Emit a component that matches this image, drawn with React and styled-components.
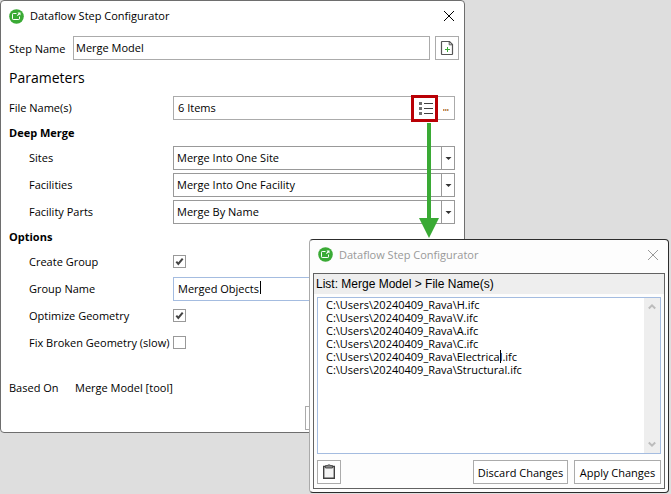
import React from 'react'
import styled, { createGlobalStyle } from 'styled-components'

const GlobalStyle = createGlobalStyle`
* {
  box-sizing: border-box;
}
body {
  margin: 0;
  background: #dedede;
  color: #000;
  font-family: 'Open Sans', 'Noto Sans', sans-serif;
  font-size: 11px;
}
input, select, button, textarea {
  font: inherit;
  color: inherit;
}
`

const Desktop = styled.main`
  position: relative;
  min-height: 494px;
  overflow: hidden;
`

const Window = styled.section`
  width: calc(100% - 206px);
  background: #fff;
  border: 1px solid #6e6e6e;
  border-radius: 4px;
  padding-bottom: 2px;
`

const ListWindow = styled.section`
  position: absolute;
  top: 239px;
  left: 309px;
  right: 2px;
  background: #fdfdfd;
  border: 1px solid #2c2c2c;
  border-left-color: #aaa;
  border-radius: 4px;
  padding: 0 3px 3px;
`

const TitleBar = styled.header`
  display: flex;
  align-items: center;
  gap: 6px;
  height: ${({ $tall }) => ($tall ? 33 : 30)}px;
  padding: ${({ $tall }) => ($tall ? '0 6px 4px 5px' : '0 9px 0 8px')};
  color: ${({ $inactive }) => ($inactive ? '#999' : '#000')};
`

const WindowTitle = styled.h1`
  flex: 1;
  margin: 0;
  font-size: 11px;
  line-height: 16px;
  font-weight: 400;
`

const PlainButton = styled.button`
  display: flex;
  padding: 0;
  border: 0;
  background: none;
`

const StepRow = styled.div`
  display: flex;
  align-items: center;
  gap: 5px;
  padding: 5px 5px 0 8px;
`

const StepLabel = styled.label`
  width: 59px;
  white-space: nowrap;
`

const TextInput = styled.input`
  flex: 1;
  min-width: 0;
  height: 24px;
  padding: 0 4px 2px ${({ $indent }) => ($indent ? 4 : 2)}px;
  border: 1px solid ${({ $focused }) => ($focused ? '#a4bce0' : '#ababab')};
  background: #fff;
  outline: none;
`

const IconButton = styled.button`
  display: flex;
  align-items: center;
  justify-content: center;
  flex-shrink: 0;
  width: 24px;
  height: 24px;
  padding: 0;
  border: 1px solid #ababab;
  background: #fff;
`

const Form = styled.div`
  padding: 0 9px 0 8px;
`

const PageHeading = styled.h2`
  margin: 0;
  font-size: 14px;
  line-height: 36px;
  font-weight: 400;
`

const GroupHeading = styled.h3`
  margin: 0;
  font-size: 11px;
  line-height: 26px;
  font-weight: 700;
`

const Rows = styled.div`
  display: flex;
  flex-direction: column;
  gap: 3px;
`

const Row = styled.div`
  display: flex;
  align-items: center;
  height: 24px;
`

const RowLabel = styled.label`
  flex-shrink: 0;
  width: 164px;
  padding-bottom: 2px;
  padding-left: ${({ $nested }) => ($nested ? 20 : 0)}px;
  white-space: nowrap;
`

const Field = styled.div`
  position: relative;
  display: flex;
  flex: 1;
  min-width: 0;
`

const FileField = styled.div`
  display: flex;
  align-items: center;
  flex: 1;
  min-width: 0;
  height: 24px;
  border: 1px solid #ababab;

  input {
    height: 22px;
    border: 0;
  }
`

const ListButton = styled.button`
  position: relative;
  display: flex;
  align-items: center;
  justify-content: center;
  flex-shrink: 0;
  width: 27px;
  height: 27px;
  padding: 0 0 0 3px;
  border: 3px solid #b90005;
  background: #fff;
`

const Arrow = styled.svg`
  position: absolute;
  top: 25px;
  left: 5px;
  pointer-events: none;
`

const MoreButton = styled(PlainButton)`
  align-items: center;
  justify-content: center;
  width: 16px;
  height: 22px;
  padding-top: 4px;
`

const SelectBox = styled.div`
  display: grid;
  grid-template-columns: 1fr 13px;
  flex: 1;
  min-width: 0;
  height: 24px;
  border: 1px solid #999;

  select {
    grid-area: 1 / 1 / 2 / 3;
    appearance: none;
    min-width: 0;
    padding: 0 16px 2px 3px;
    border: 0;
    background: #fff;
  }
  svg {
    grid-area: 1 / 2;
    width: 13px;
    height: 22px;
    border-left: 1px solid #999;
    pointer-events: none;
  }
`

const CheckWrap = styled.span`
  display: grid;
  padding-bottom: 1px;

  input {
    grid-area: 1 / 1;
    appearance: none;
    width: 13px;
    height: 13px;
    margin: 0;
    border: 1px solid #999;
    background: #fff;
  }
  svg {
    grid-area: 1 / 1;
    display: none;
    pointer-events: none;
  }
  input:checked + svg {
    display: block;
  }
`

const Caret = styled.span`
  position: absolute;
  top: ${({ $top }) => $top}px;
  left: ${({ $left }) => $left}px;
  width: 1px;
  height: 13px;
  background: #000;
`

const BasedOn = styled.dl`
  display: flex;
  align-items: center;
  height: 24px;
  margin: 20px 0 7px;

  dt {
    width: 66px;
  }
  dd {
    margin: 0;
  }
`

const Footer = styled.footer`
  display: flex;
  justify-content: flex-end;
`

const Button = styled.button`
  flex-shrink: 0;
  width: ${({ $width }) => $width}px;
  height: 24px;
  padding: 0;
  border: 1px solid #ababab;
  background: #fff;
  white-space: nowrap;
`

const Panel = styled.div`
  border: 1px solid #626262;
  background: #fdfdfd;
`

const PanelHeading = styled.h2`
  margin: 0 0 3px;
  padding-left: 2px;
  background: #eee;
  font-family: 'Liberation Sans', Arial, sans-serif;
  font-size: 12px;
  line-height: 20px;
  font-weight: 400;
`

const ListBox = styled.div`
  position: relative;
  display: flex;
  height: 157px;
  margin: 0 3px;
  border: 1px solid #a4bce0;

  textarea {
    flex: 1;
    min-width: 0;
    padding: 0 8px;
    border: 0;
    background: #fff;
    line-height: 13px;
    outline: none;
    resize: none;
    overflow: hidden;
    white-space: pre;
  }
`

const ScrollTrack = styled.div`
  display: flex;
  flex-direction: column;
  justify-content: space-between;
  align-items: center;
  width: 16px;
  padding: 5px 0;
  background: #eee;
`

const PanelFooter = styled.footer`
  display: flex;
  gap: 6px;
  padding: 6px 3px 4px;

  & > :first-child {
    margin-right: auto;
  }
`

const LogoIcon = () => (
  <svg width="15" height="15" viewBox="0 0 15 15">
    <circle cx="7.5" cy="7.5" r="7.3" fill="#3aaa35" />
    <path d="M7.5 4.5H4.2a.7.7 0 0 0-.7.7v4.6a.7.7 0 0 0 .7.7h5.600a.7.7 0 0 0 .7-.7V7.5" fill="none" stroke="#fff" strokeWidth="1" />
    <path d="M8.500 3.500h3v3l-1-1-2 1.500-.5-.5L9.500 4.500z" fill="#fff" />
  </svg>
)

const CloseIcon = () => (
  <svg width="12" height="12" viewBox="0 0 12 12">
    <path d="M1 1 11 11M11 1 1 11" stroke="currentColor" strokeWidth="1" />
  </svg>
)

const AddPageIcon = () => (
  <svg width="14" height="16" viewBox="0 0 14 16">
    <path d="M2 1.5h7.5l3 3V14q0 .5-.5.5H2q-.5 0-.5-.5V2q0-.5.5-.5Z" fill="#fff" stroke="#555" strokeWidth="1.2" />
    <path d="M9.2 1.5v3.3h3.3" fill="none" stroke="#555" strokeWidth="1" />
    <path d="M7.5 7v5M5 9.5h5" stroke="#3aaa35" />
  </svg>
)

const ListIcon = () => (
  <svg width="14" height="15" viewBox="0 0 14 15">
    <path d="M0 1h3v3H0zM0 6h3v3H0zM0 11h3v3H0z" fill="#707070" />
    <path d="M5 2.5h9M5 7.5h9M5 12.5h9" stroke="#404040" />
  </svg>
)

const ClipboardIcon = () => (
  <svg width="14" height="16" viewBox="0 0 14 16">
    <path d="M1.7 2.5h10.6v11.8H1.7z" fill="#f3f3f3" stroke="#404040" strokeWidth="1.4" />
    <path d="M3.5 1.6H5Q7 0 9 1.6h1.5V4h-7z" fill="#888" stroke="#505050" strokeWidth="1" />
  </svg>
)

const Chevron = ({ down }) => (
  <svg width="8" height="7" viewBox="0 0 8 7">
    <path d={down ? 'M.8 1.5 4 4.7l3.2-3.2' : 'M.8 5.5 4 2.3l3.2 3.2'} fill="none" stroke="#bcbcbc" strokeWidth="2" />
  </svg>
)

const merges = [
  { id: 'sites', label: 'Sites', value: 'Merge Into One Site' },
  { id: 'facilities', label: 'Facilities', value: 'Merge Into One Facility' },
  { id: 'parts', label: 'Facility Parts', value: 'Merge By Name' },
]

const files = ['H', 'V', 'A', 'C', 'Electrical', 'Structural']
  .map((name) => `C:\\Users\\20240409_Rava\\${name}.ifc`)
  .join('\n')

const CheckRow = ({ id, label, checked }) => (
  <Row>
    <RowLabel $nested htmlFor={id}>{label}</RowLabel>
    <CheckWrap>
      <input id={id} type="checkbox" defaultChecked={checked} />
      <svg width="13" height="13" viewBox="0 0 13 13">
        <path d="M3.3 6.7 5.3 9 9.7 3.6" fill="none" stroke="#444" strokeWidth="2" />
      </svg>
    </CheckWrap>
  </Row>
)

const StepWindow = () => (
  <Window>
    <TitleBar>
      <LogoIcon />
      <WindowTitle>Dataflow Step Configurator</WindowTitle>
      <PlainButton aria-label="Close"><CloseIcon /></PlainButton>
    </TitleBar>
    <StepRow>
      <StepLabel htmlFor="step">Step Name</StepLabel>
      <TextInput id="step" defaultValue="Merge Model" />
      <IconButton aria-label="Add"><AddPageIcon /></IconButton>
    </StepRow>
    <Form>
      <PageHeading>Parameters</PageHeading>
      <Row>
        <RowLabel htmlFor="files">File Name(s)</RowLabel>
        <FileField>
          <TextInput id="files" $indent defaultValue="6 Items" />
          <ListButton aria-label="Edit list">
            <ListIcon />
            <Arrow width="20" height="116" viewBox="0 0 20 116">
              <path d="M8 0h4v95h8l-10 20L0 95h8z" fill="#3aaa35" />
            </Arrow>
          </ListButton>
          <MoreButton aria-label="Browse">
            <svg width="6" height="2" viewBox="0 0 6 2">
              <path d="M0 0h1v2H0zM2 0h1v2H2zM4 0h1v2H4z" fill="#e08a30" />
              <path d="M1 0h1v2H1zM3 0h1v2H3zM5 0h1v2H5z" fill="#b8c4d8" />
            </svg>
          </MoreButton>
        </FileField>
      </Row>
      <GroupHeading>Deep Merge</GroupHeading>
      <Rows>
        {merges.map((merge) => (
          <Row key={merge.id}>
            <RowLabel $nested htmlFor={merge.id}>{merge.label}</RowLabel>
            <SelectBox>
              <select id={merge.id}>
                <option>{merge.value}</option>
              </select>
              <svg viewBox="0 0 12 22">
                <path d="M3.5 10h6l-3 3z" fill="#333" />
              </svg>
            </SelectBox>
          </Row>
        ))}
      </Rows>
      <GroupHeading>Options</GroupHeading>
      <Rows>
        <CheckRow id="create" label="Create Group" checked />
        <Row>
          <RowLabel $nested htmlFor="group">Group Name</RowLabel>
          <Field>
            <TextInput id="group" $indent $focused defaultValue="Merged Objects" />
            <Caret $top={4} $left={87} />
          </Field>
        </Row>
        <CheckRow id="optimize" label="Optimize Geometry" checked />
        <CheckRow id="fix" label="Fix Broken Geometry (slow)" />
      </Rows>
      <BasedOn>
        <dt>Based On</dt>
        <dd>Merge Model [tool]</dd>
      </BasedOn>
      <Footer>
        <Button $width={150} aria-label="Cancel" />
      </Footer>
    </Form>
  </Window>
)

const FileListWindow = () => (
  <ListWindow>
    <TitleBar $tall $inactive>
      <LogoIcon />
      <WindowTitle>Dataflow Step Configurator</WindowTitle>
      <PlainButton aria-label="Close"><CloseIcon /></PlainButton>
    </TitleBar>
    <Panel>
      <PanelHeading>List: Merge Model &gt; File Name(s)</PanelHeading>
      <ListBox>
        <textarea aria-label="File names" defaultValue={files} />
        <Caret $top={52} $left={182} />
        <ScrollTrack>
          <Chevron />
          <Chevron down />
        </ScrollTrack>
      </ListBox>
      <PanelFooter>
        <IconButton aria-label="Paste"><ClipboardIcon /></IconButton>
        <Button $width={95}>Discard Changes</Button>
        <Button $width={87}>Apply Changes</Button>
      </PanelFooter>
    </Panel>
  </ListWindow>
)

const App = () => {
  return (
    <Desktop>
      <GlobalStyle />
      <StepWindow />
      <FileListWindow />
    </Desktop>
  )
}

export default App
